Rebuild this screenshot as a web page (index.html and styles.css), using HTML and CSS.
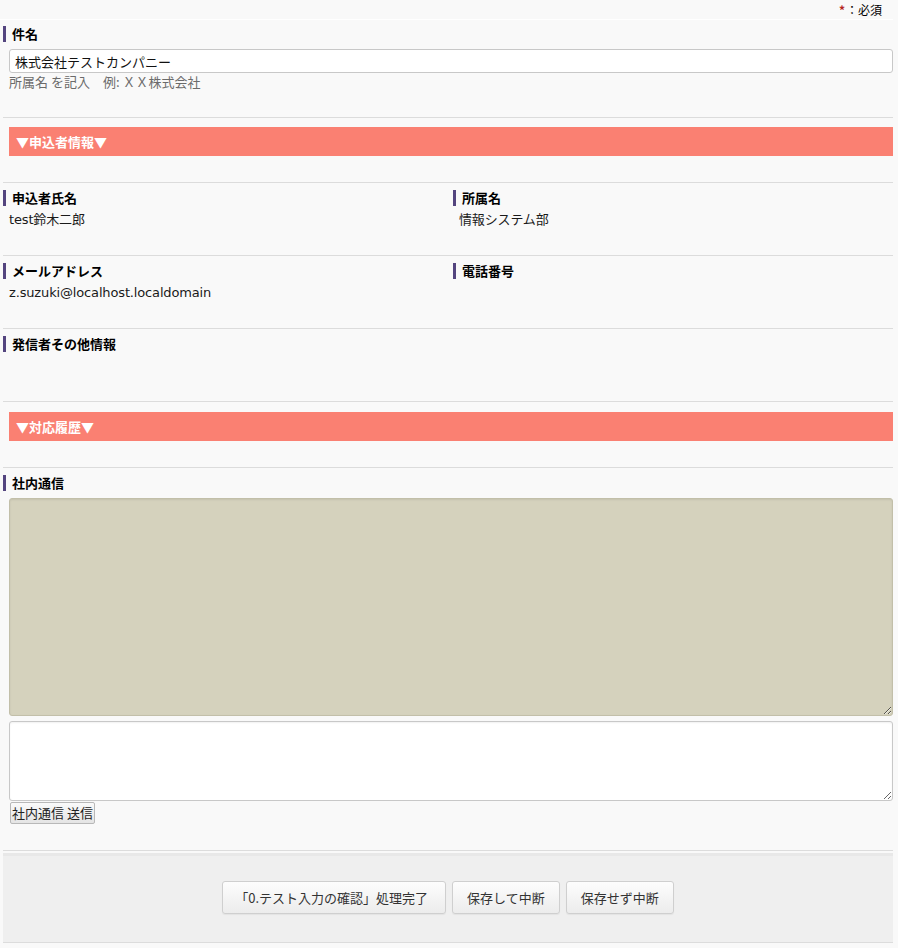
FILE: index.html
```html
<!DOCTYPE html>
<html lang="ja">
<head>
<meta charset="utf-8">
<title>フォーム</title>
<link rel="stylesheet" href="styles.css">
</head>
<body>
<div class="page">
  <div class="topbar">
    <span class="required-note"><span class="star">*</span>：必須</span>
  </div>
  <div class="row row-first">
    <div class="label">件名</div>
    <input class="text-input" type="text" value="株式会社テストカンパニー">
    <div class="hint">所属名 を記入　例: ＸＸ株式会社</div>
  </div>
  <div class="row row-section">
    <div class="section-bar">▼申込者情報▼</div>
  </div>
  <div class="row row-field cols">
    <div class="col">
      <div class="label">申込者氏名</div>
      <div class="value">test鈴木二郎</div>
    </div>
    <div class="col">
      <div class="label">所属名</div>
      <div class="value">情報システム部</div>
    </div>
  </div>
  <div class="row row-field cols">
    <div class="col">
      <div class="label">メールアドレス</div>
      <div class="value">z.suzuki@localhost.localdomain</div>
    </div>
    <div class="col">
      <div class="label">電話番号</div>
      <div class="value"></div>
    </div>
  </div>
  <div class="row row-field">
    <div class="col">
      <div class="label">発信者その他情報</div>
      <div class="value"></div>
    </div>
  </div>
  <div class="row row-section row-section-b">
    <div class="section-bar">▼対応履歴▼</div>
  </div>
  <div class="row row-comm">
    <div class="label">社内通信</div>
    <textarea class="history" readonly></textarea>
    <textarea class="message"></textarea>
    <button class="send-btn" type="button">社内通信 送信</button>
  </div>
  <div class="footer-wrap">
    <div class="footer">
      <button class="btn" type="button">「0.テスト入力の確認」処理完了</button>
      <button class="btn" type="button">保存して中断</button>
      <button class="btn" type="button">保存せず中断</button>
    </div>
  </div>
</div>
</body>
</html>
```

FILE: styles.css
```css
html, body {
  margin: 0;
  padding: 0;
  background: #f9f9f9;
}

body {
  font-family: "DejaVu Sans", "Noto Sans CJK JP", sans-serif;
  font-size: 13px;
  color: #111;
  width: 898px;
  height: 948px;
  overflow: hidden;
}

.topbar {
  height: 19px;
  border-bottom: 1px solid #ffffff;
  margin-right: 5px;
  display: flex;
  justify-content: flex-end;
  align-items: center;
  padding-right: 11px;
}

.required-note {
  font-size: 12px;
  line-height: 16px;
  color: #000;
  font-family: "Noto Sans CJK JP", sans-serif;
}

.star {
  color: #b5261e;
  font-weight: bold;
  margin-right: 1px;
}

.row {
  margin: 0 5px 0 3px;
  border-top: 1px solid #dcdcdc;
  box-sizing: border-box;
}

.row-first {
  border-top: none;
  height: 97px;
  padding-top: 6px;
}

.row-field {
  height: 73px;
  padding-top: 7px;
}

.row-section {
  height: 65px;
  padding-top: 9px;
}

.row-section-b {
  height: 66px;
  padding-top: 10px;
}

.row-comm {
  height: 383px;
  padding-top: 7px;
}

.cols {
  display: grid;
  grid-template-columns: 450px 1fr;
}

.label {
  border-left: 3px solid #54457f;
  padding-left: 6px;
  font-weight: bold;
  font-size: 13px;
  line-height: 16px;
  height: 16px;
  color: #000;
  font-family: "Noto Sans CJK JP", sans-serif;
}

.value {
  margin-top: 6px;
  padding-left: 6px;
  line-height: 16px;
  min-height: 16px;
  color: #1a1a1a;
  letter-spacing: -0.15px;
}

.text-input {
  display: block;
  box-sizing: border-box;
  margin: 7px 0 0 6px;
  width: 884px;
  height: 24px;
  border: 1px solid #c8c8c8;
  border-radius: 3px;
  background: #fff;
  padding: 0 5px;
  font-family: "Noto Sans CJK JP", sans-serif;
  font-size: 13px;
  color: #111;
  outline: none;
}

.hint {
  margin-left: 6px;
  line-height: 16px;
  margin-top: 1px;
  color: #6b6b6b;
  font-family: "Noto Sans CJK JP", sans-serif;
}

.section-bar {
  margin-left: 6px;
  height: 29px;
  background: #fa8072;
  color: #fff;
  font-weight: bold;
  font-family: "Noto Sans CJK JP", sans-serif;
  font-size: 13px;
  line-height: 29px;
  padding-left: 7px;
}

.history,
.message {
  display: block;
  box-sizing: border-box;
  margin-left: 6px;
  width: 884px;
  border-radius: 3px;
  font-family: "Noto Sans CJK JP", sans-serif;
  font-size: 13px;
  outline: none;
}

.history {
  margin-top: 7px;
  height: 218px;
  background: #d5d2bd;
  border: 1px solid #c2bfa9;
  box-shadow: inset 0 1px 2px rgba(0, 0, 0, 0.08);
}

.message {
  margin-top: 5px;
  height: 80px;
  background: #fff;
  border: 1px solid #c8c8c8;
  box-shadow: inset 0 1px 2px rgba(0, 0, 0, 0.06);
}

.send-btn {
  display: block;
  margin: 1px 0 0 7px;
  height: 22px;
  padding: 0 1px;
  border: 1px solid #b8b8b8;
  border-radius: 2px;
  background: linear-gradient(#fafafa, #e4e4e4);
  font-family: "Noto Sans CJK JP", sans-serif;
  font-size: 13px;
  line-height: 18px;
  color: #222;
}

.footer-wrap {
  margin: 0 5px 0 3px;
  border-top: 1px solid #dcdcdc;
  padding-top: 2px;
}

.footer {
  height: 90px;
  background: #efefef;
  border-top: 3px solid #e8e8e8;
  border-bottom: 1px solid #dcdcdc;
  box-sizing: border-box;
  display: flex;
  justify-content: center;
  align-items: center;
  gap: 6px;
  padding-bottom: 3px;
}

.btn {
  height: 33px;
  padding: 0 14px;
  border: 1px solid #cfcfcf;
  border-radius: 3px;
  background: linear-gradient(#fdfdfd, #ececec);
  font-family: "Noto Sans CJK JP", sans-serif;
  font-size: 13px;
  color: #333;
  box-shadow: 0 1px 1px rgba(0, 0, 0, 0.05);
}

.btn:first-child {
  padding: 0 17px 0 12px;
}
```
